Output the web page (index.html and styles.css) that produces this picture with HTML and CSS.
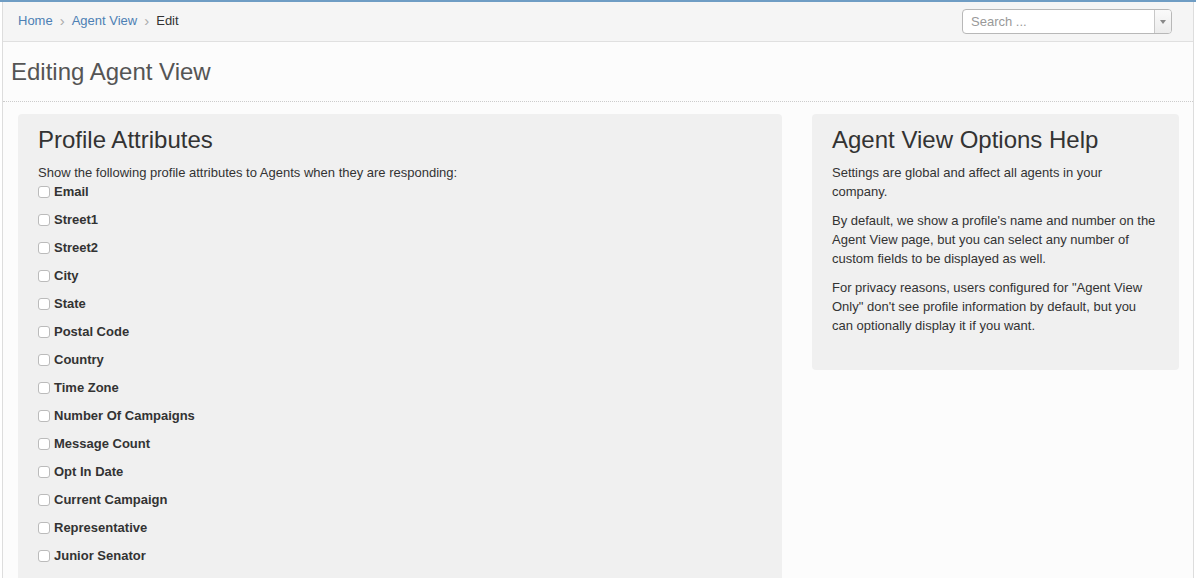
FILE: index.html
```html
<!DOCTYPE html>
<html lang="en">
<head>
  <meta charset="UTF-8">
  <title>Editing Agent View</title>
  <link rel="stylesheet" href="styles.css">
</head>
<body>
  <div class="page">
    <div class="topbar">
      <ol class="breadcrumb">
        <li><a href="#">Home</a></li>
        <li class="sep">&#8250;</li>
        <li><a href="#">Agent View</a></li>
        <li class="sep">&#8250;</li>
        <li class="active">Edit</li>
      </ol>
      <div class="search">
        <input type="text" placeholder="Search ...">
        <span class="search-toggle"><span class="caret"></span></span>
      </div>
    </div>

    <div class="page-header">
      <h1>Editing Agent View</h1>
    </div>

    <div class="content">
      <div class="well">
        <h2>Profile Attributes</h2>
        <p class="intro">Show the following profile attributes to Agents when they are responding:</p>
        <label class="check"><input type="checkbox"> Email</label>
        <label class="check"><input type="checkbox"> Street1</label>
        <label class="check"><input type="checkbox"> Street2</label>
        <label class="check"><input type="checkbox"> City</label>
        <label class="check"><input type="checkbox"> State</label>
        <label class="check"><input type="checkbox"> Postal Code</label>
        <label class="check"><input type="checkbox"> Country</label>
        <label class="check"><input type="checkbox"> Time Zone</label>
        <label class="check"><input type="checkbox"> Number Of Campaigns</label>
        <label class="check"><input type="checkbox"> Message Count</label>
        <label class="check"><input type="checkbox"> Opt In Date</label>
        <label class="check"><input type="checkbox"> Current Campaign</label>
        <label class="check"><input type="checkbox"> Representative</label>
        <label class="check"><input type="checkbox"> Junior Senator</label>
      </div>

      <div class="help">
        <div class="well help-well">
          <h2>Agent View Options Help</h2>
          <p>Settings are global and affect all agents in your company.</p>
          <p>By default, we show a profile's name and number on the Agent View page, but you can select any number of custom fields to be displayed as well.</p>
          <p>For privacy reasons, users configured for "Agent View Only" don't see profile information by default, but you can optionally display it if you want.</p>
        </div>
      </div>
    </div>
  </div>
</body>
</html>
```

FILE: styles.css
```css
html,
body {
  margin: 0;
  padding: 0;
  background-color: #fff;
}

body {
  font-family: "Liberation Sans", Arial, sans-serif;
  font-size: 13px;
  line-height: 19px;
  color: #333;
  border-top: 2px solid #6f9dc4;
}

.page {
  margin: 0 2px;
  border-left: 1px solid #ddd;
  border-right: 1px solid #ddd;
  background-color: #fcfcfc;
  min-height: 576px;
}

.topbar {
  display: flex;
  justify-content: space-between;
  align-items: center;
  height: 39px;
  padding: 0 21px 0 15px;
  background-color: #f5f5f5;
  border-bottom: 1px solid #e0e0e0;
}

.breadcrumb {
  display: flex;
  align-items: center;
  gap: 7px;
  list-style: none;
  margin: -2px 0 0;
  padding: 0;
}

.breadcrumb a {
  color: #4d80b4;
  text-decoration: none;
}

.breadcrumb .sep {
  color: #aaa;
  font-size: 15px;
}

.breadcrumb .active {
  color: #333;
}

.search {
  display: flex;
  width: 208px;
  height: 23px;
  border: 1px solid #b8b8b8;
  border-radius: 4px;
  background-color: #fff;
  overflow: hidden;
}

.search input {
  flex: 1;
  min-width: 0;
  border: none;
  outline: none;
  padding: 0 8px;
  font-family: "Liberation Sans", Arial, sans-serif;
  font-size: 13px;
  color: #555;
  background: transparent;
}

.search input::placeholder {
  color: #999;
}

.search-toggle {
  display: flex;
  align-items: center;
  justify-content: center;
  width: 16px;
  border-left: 1px solid #c8c8c8;
  background: linear-gradient(#fafafa, #ececec);
}

.caret {
  width: 0;
  height: 0;
  border-left: 3px solid transparent;
  border-right: 3px solid transparent;
  border-top: 4px solid #888;
}

.page-header {
  padding: 15px 8px 0;
  height: 44px;
  border-bottom: 1px dotted #ccc;
}

.page-header h1 {
  margin: 0;
  font-size: 24px;
  font-weight: normal;
  line-height: 30px;
  color: #555;
}

.content {
  display: grid;
  grid-template-columns: 764px 367px;
  gap: 30px;
  padding: 12px 15px 0;
}

.well {
  background-color: #f0f0f0;
  border-radius: 4px;
  padding: 14px 20px 20px;
}

.well h2 {
  margin: 0 0 11px;
  font-size: 24px;
  font-weight: normal;
  line-height: 24px;
  color: #333;
}

.well p {
  margin: 0 0 10px;
}

.well .intro {
  margin: 0;
}

.check {
  display: flex;
  align-items: center;
  gap: 4px;
  height: 19px;
  margin-bottom: 9px;
  font-weight: bold;
  color: #333;
}

.check input {
  appearance: none;
  width: 12px;
  height: 12px;
  margin: 0;
  border: 1px solid #bbb;
  border-radius: 3px;
  background-color: #fff;
}

.help-well {
  padding-bottom: 25px;
}
```
